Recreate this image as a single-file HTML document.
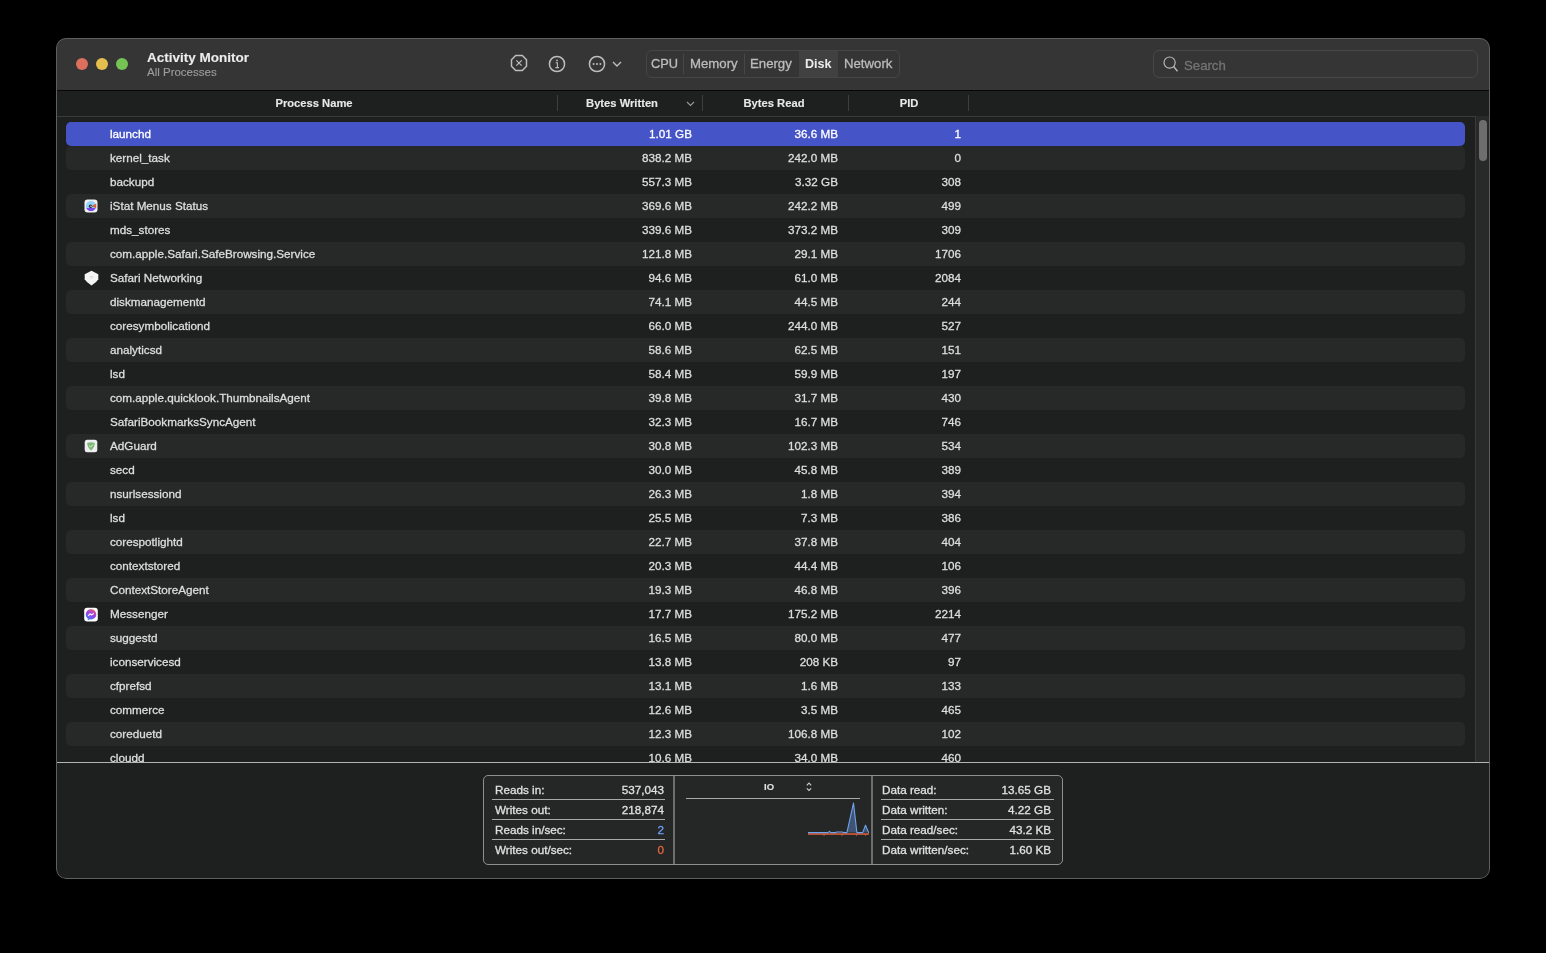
<!DOCTYPE html>
<html><head><meta charset="utf-8">
<style>
*{margin:0;padding:0;box-sizing:border-box}
html,body{width:1546px;height:953px;background:#000;overflow:hidden;font-family:"Liberation Sans",sans-serif}
.win{position:absolute;left:56px;top:38px;width:1434px;height:841px;border-radius:10px;background:#1e1f1f;overflow:hidden}
.bord{position:absolute;left:0;top:0;width:1434px;height:841px;border-radius:10px;border:1px solid #5f5f5f}
.tb{position:absolute;left:0;top:0;width:100%;height:53px;background:#353535;border-bottom:1px solid #070707}
.light{position:absolute;top:20px;width:12px;height:12px;border-radius:50%}
.t1{position:absolute;left:91px;top:12px;font-weight:bold;font-size:13.5px;color:#ececec;letter-spacing:0}
.t2{position:absolute;left:91px;top:28px;font-size:11.5px;color:#9d9d9d}
.seg{position:absolute;left:590px;top:12px;width:254px;height:28px;border:1px solid #464646;border-radius:6px}
.seg span{position:absolute;top:5px;font-size:13.2px;color:#bcbcbc}
.seg .sep{position:absolute;top:3px;width:1px;height:20px;background:#474747}
.seg .on{position:absolute;left:152px;top:0;width:39px;height:26px;background:#414141}
.search{position:absolute;left:1097px;top:12px;width:325px;height:28px;border:1px solid #474747;border-radius:6px}
.search span{position:absolute;left:30px;top:7px;font-size:13.2px;color:#747474}
.hdr{position:absolute;left:0;top:53px;width:100%;height:26px;background:#1e1f1f;border-bottom:1px solid #3b3b3b}
.hdr span{position:absolute;top:6px;width:200px;text-align:center;font-weight:bold;font-size:11.2px;color:#e8e8e8}
.hdr .vs{position:absolute;top:4px;width:1px;height:16px;background:#3e3e3e}
.tbl{position:absolute;left:0;top:79px;width:1419px;height:645px;overflow:hidden}
.row{position:absolute;left:10px;width:1399px;height:24px;border-radius:5px;font-size:11.7px;color:#dedede}
.row.alt{background:#272828}
.row.sel{background:#4555c8;color:#fff}
.row span{position:absolute;top:5px;white-space:nowrap}
.nm{left:44px}
.bw{right:773px}
.br{right:627px}
.pid{right:504px}
.ic{position:absolute}
.scroll{position:absolute;left:1419px;top:78px;width:15px;height:646px;background:#282929;border-left:1px solid #3a3a3a}
.thumb{position:absolute;left:3px;top:4px;width:8px;height:41px;border-radius:4px;background:#6e6e6e}
.split{position:absolute;left:0;top:724px;width:100%;height:1px;background:#b4b4b4}
.box{position:absolute;left:427px;top:737px;width:580px;height:90px;border:1px solid #8f8f8f;border-radius:5px;background:#252626}
.st{position:absolute;font-size:11.7px;color:#e0e0e0;white-space:nowrap}
.hl{position:absolute;height:1px;background:#a9a9a9}
.vd{position:absolute;top:0;width:2px;height:88px;background:#6e6e6e}
.io{position:absolute;left:280px;top:5px;font-weight:bold;font-size:9.5px;color:#e0e0e0}
.tb,.hdr,.tbl,.box{will-change:transform}
.row span,.st,.seg span,.search span{-webkit-text-stroke:0.3px currentColor}
.t1,.t2,.hdr span,.io{-webkit-text-stroke:0.12px currentColor}
</style></head><body>
<div class="win">
  <div class="tb">
    <div class="light" style="left:20px;background:#dd705d"></div>
    <div class="light" style="left:40px;background:#e3bf4d"></div>
    <div class="light" style="left:60px;background:#77c255"></div>
    <div class="t1">Activity Monitor</div>
    <div class="t2">All Processes</div>
    <svg style="position:absolute;left:454px;top:16px" width="18" height="18" viewBox="0 0 18 18"><path d="M5.7 1.5 L12.3 1.5 L16.5 5.7 L16.5 12.3 L12.3 16.5 L5.7 16.5 L1.5 12.3 L1.5 5.7 Z" fill="none" stroke="#bdbdbd" stroke-width="1.5"/><path d="M6.3 6.3 L11.7 11.7 M11.7 6.3 L6.3 11.7" stroke="#bdbdbd" stroke-width="1.2"/></svg>
    <svg style="position:absolute;left:492px;top:16.5px" width="18" height="18" viewBox="0 0 18 18"><circle cx="9" cy="9" r="7.6" fill="none" stroke="#bdbdbd" stroke-width="1.5"/><circle cx="9" cy="5.4" r="0.9" fill="#bdbdbd"/><path d="M7.6 7.8 L9.4 7.8 L9.4 12.6 M7.4 12.6 L11 12.6" stroke="#bdbdbd" stroke-width="1.1" fill="none"/></svg>
    <svg style="position:absolute;left:532px;top:16.5px" width="18" height="18" viewBox="0 0 18 18"><circle cx="9" cy="9" r="7.6" fill="none" stroke="#bdbdbd" stroke-width="1.5"/><circle cx="5.6" cy="9" r="1" fill="#bdbdbd"/><circle cx="9" cy="9" r="1" fill="#bdbdbd"/><circle cx="12.4" cy="9" r="1" fill="#bdbdbd"/></svg>
    <svg style="position:absolute;left:556px;top:22px" width="10" height="8" viewBox="0 0 10 8"><path d="M1 2 L5 6 L9 2" fill="none" stroke="#bdbdbd" stroke-width="1.4"/></svg>
    <div class="seg">
      <div class="on"></div>
      <span style="left:4px;font-size:12.8px">CPU</span>
      <div class="sep" style="left:36px"></div>
      <span style="left:43px">Memory</span>
      <div class="sep" style="left:97px"></div>
      <span style="left:103px">Energy</span>
      <span style="left:158px;font-weight:bold;color:#ececec;font-size:12.6px;top:6px;-webkit-text-stroke:0">Disk</span>
      <span style="left:197px">Network</span>
    </div>
    <div class="search">
      <svg style="position:absolute;left:9px;top:5px" width="16" height="16" viewBox="0 0 16 16"><circle cx="6.6" cy="6.6" r="5.6" fill="none" stroke="#b5b5b5" stroke-width="1.2"/><path d="M10.6 10.6 L14.5 15.2" stroke="#b5b5b5" stroke-width="1.5"/></svg>
      <span>Search</span>
    </div>
  </div>
  <div class="hdr">
    <span style="left:158px">Process Name</span>
    <div class="vs" style="left:501px"></div>
    <span style="left:466px">Bytes Written</span>
    <svg style="position:absolute;left:630px;top:10px" width="9" height="6" viewBox="0 0 9 6"><path d="M1 1 L4.5 4.5 L8 1" fill="none" stroke="#9a9a9a" stroke-width="1.1"/></svg>
    <div class="vs" style="left:646px"></div>
    <span style="left:618px">Bytes Read</span>
    <div class="vs" style="left:792px"></div>
    <span style="left:753px">PID</span>
    <div class="vs" style="left:912px"></div>
  </div>
  <div class="tbl">
<div class="row sel" style="top:5px"><span class="nm">launchd</span><span class="bw">1.01 GB</span><span class="br">36.6 MB</span><span class="pid">1</span></div>
<div class="row alt" style="top:29px"><span class="nm">kernel_task</span><span class="bw">838.2 MB</span><span class="br">242.0 MB</span><span class="pid">0</span></div>
<div class="row" style="top:53px"><span class="nm">backupd</span><span class="bw">557.3 MB</span><span class="br">3.32 GB</span><span class="pid">308</span></div>
<div class="row alt" style="top:77px"><svg class="ic" style="left:18px;top:5px" width="14" height="14" viewBox="0 0 14 14"><rect x="0.5" y="0.5" width="13" height="13" rx="3" fill="#efefef"/><circle cx="7" cy="7" r="5.1" fill="#8ed2fa"/><path d="M2.31 9 A5.1 5.1 0 0 0 11.69 9 Z" fill="#7846ee"/><path d="M7.6 7.2 L12.2 4.4 L12.2 9.2 Z" fill="#dd5f33"/><circle cx="6.6" cy="7.2" r="1.7" fill="#202030"/><circle cx="7" cy="7.2" r="0.8" fill="#eee"/></svg><span class="nm">iStat Menus Status</span><span class="bw">369.6 MB</span><span class="br">242.2 MB</span><span class="pid">499</span></div>
<div class="row" style="top:101px"><span class="nm">mds_stores</span><span class="bw">339.6 MB</span><span class="br">373.2 MB</span><span class="pid">309</span></div>
<div class="row alt" style="top:125px"><span class="nm">com.apple.Safari.SafeBrowsing.Service</span><span class="bw">121.8 MB</span><span class="br">29.1 MB</span><span class="pid">1706</span></div>
<div class="row" style="top:149px"><svg class="ic" style="left:18px;top:4px" width="15" height="16" viewBox="0 0 15 16"><path d="M7.5 0.8 L14.3 4.3 L14.3 9.2 Q12.5 12.5 7.5 15.5 Q2.5 12.5 0.7 9.2 L0.7 4.3 Z" fill="#f4f4f4"/><path d="M5 6.2 L10 6.2 L7.5 8.8 Z" fill="#dcdcdc"/></svg><span class="nm">Safari Networking</span><span class="bw">94.6 MB</span><span class="br">61.0 MB</span><span class="pid">2084</span></div>
<div class="row alt" style="top:173px"><span class="nm">diskmanagementd</span><span class="bw">74.1 MB</span><span class="br">44.5 MB</span><span class="pid">244</span></div>
<div class="row" style="top:197px"><span class="nm">coresymbolicationd</span><span class="bw">66.0 MB</span><span class="br">244.0 MB</span><span class="pid">527</span></div>
<div class="row alt" style="top:221px"><span class="nm">analyticsd</span><span class="bw">58.6 MB</span><span class="br">62.5 MB</span><span class="pid">151</span></div>
<div class="row" style="top:245px"><span class="nm">lsd</span><span class="bw">58.4 MB</span><span class="br">59.9 MB</span><span class="pid">197</span></div>
<div class="row alt" style="top:269px"><span class="nm">com.apple.quicklook.ThumbnailsAgent</span><span class="bw">39.8 MB</span><span class="br">31.7 MB</span><span class="pid">430</span></div>
<div class="row" style="top:293px"><span class="nm">SafariBookmarksSyncAgent</span><span class="bw">32.3 MB</span><span class="br">16.7 MB</span><span class="pid">746</span></div>
<div class="row alt" style="top:317px"><svg class="ic" style="left:18px;top:5px" width="14" height="14" viewBox="0 0 14 14"><rect x="0.7" y="0.7" width="12.6" height="12.6" rx="2.5" fill="#eeeef2"/><path d="M3.2 3.9 Q7 2.6 10.8 3.9 Q10.6 8.8 7 11.4 Q3.4 8.8 3.2 3.9 Z" fill="#7db873"/><path d="M5 6.6 L6.6 8 L9.2 5.4" stroke="#e3efe0" stroke-width="0.9" fill="none"/></svg><span class="nm">AdGuard</span><span class="bw">30.8 MB</span><span class="br">102.3 MB</span><span class="pid">534</span></div>
<div class="row" style="top:341px"><span class="nm">secd</span><span class="bw">30.0 MB</span><span class="br">45.8 MB</span><span class="pid">389</span></div>
<div class="row alt" style="top:365px"><span class="nm">nsurlsessiond</span><span class="bw">26.3 MB</span><span class="br">1.8 MB</span><span class="pid">394</span></div>
<div class="row" style="top:389px"><span class="nm">lsd</span><span class="bw">25.5 MB</span><span class="br">7.3 MB</span><span class="pid">386</span></div>
<div class="row alt" style="top:413px"><span class="nm">corespotlightd</span><span class="bw">22.7 MB</span><span class="br">37.8 MB</span><span class="pid">404</span></div>
<div class="row" style="top:437px"><span class="nm">contextstored</span><span class="bw">20.3 MB</span><span class="br">44.4 MB</span><span class="pid">106</span></div>
<div class="row alt" style="top:461px"><span class="nm">ContextStoreAgent</span><span class="bw">19.3 MB</span><span class="br">46.8 MB</span><span class="pid">396</span></div>
<div class="row" style="top:485px"><svg class="ic" style="left:18px;top:4.5px" width="14" height="15" viewBox="0 0 14 15"><rect x="0.2" y="0.8" width="13.6" height="13.6" rx="3" fill="#ffffff"/><defs><linearGradient id="mg" x1="0.2" y1="1" x2="0.8" y2="0"><stop offset="0" stop-color="#3b7cf0"/><stop offset="0.5" stop-color="#9b3ff0"/><stop offset="1" stop-color="#e45c6a"/></linearGradient></defs><ellipse cx="7" cy="7.4" rx="5.3" ry="5.1" fill="url(#mg)"/><path d="M3.6 10.8 L3.9 13.3 L6 12.2" fill="#4a78ee"/><path d="M4.2 8.8 L6 6.8 L7.6 8 L9.8 6.4" stroke="#fff" stroke-width="1.1" fill="none" stroke-linejoin="round"/></svg><span class="nm">Messenger</span><span class="bw">17.7 MB</span><span class="br">175.2 MB</span><span class="pid">2214</span></div>
<div class="row alt" style="top:509px"><span class="nm">suggestd</span><span class="bw">16.5 MB</span><span class="br">80.0 MB</span><span class="pid">477</span></div>
<div class="row" style="top:533px"><span class="nm">iconservicesd</span><span class="bw">13.8 MB</span><span class="br">208 KB</span><span class="pid">97</span></div>
<div class="row alt" style="top:557px"><span class="nm">cfprefsd</span><span class="bw">13.1 MB</span><span class="br">1.6 MB</span><span class="pid">133</span></div>
<div class="row" style="top:581px"><span class="nm">commerce</span><span class="bw">12.6 MB</span><span class="br">3.5 MB</span><span class="pid">465</span></div>
<div class="row alt" style="top:605px"><span class="nm">coreduetd</span><span class="bw">12.3 MB</span><span class="br">106.8 MB</span><span class="pid">102</span></div>
<div class="row" style="top:629px"><span class="nm">cloudd</span><span class="bw">10.6 MB</span><span class="br">34.0 MB</span><span class="pid">460</span></div>
  </div>
  <div class="scroll"><div class="thumb"></div></div>
  <div class="split"></div>
  <div class="box">
    <span class="st" style="left:11px;top:7px">Reads in:</span><span class="st r" style="right:398px;top:7px">537,043</span>
    <div class="hl" style="left:8px;top:23px;width:173px"></div>
    <span class="st" style="left:11px;top:27px">Writes out:</span><span class="st r" style="right:398px;top:27px">218,874</span>
    <div class="hl" style="left:8px;top:43px;width:173px"></div>
    <span class="st" style="left:11px;top:47px">Reads in/sec:</span><span class="st r" style="right:398px;top:47px;color:#6d9ef2">2</span>
    <div class="hl" style="left:8px;top:63px;width:173px"></div>
    <span class="st" style="left:11px;top:67px">Writes out/sec:</span><span class="st r" style="right:398px;top:67px;color:#e3663f">0</span>
    <div class="vd" style="left:189px"></div>
    <span class="io">IO</span>
    <svg style="position:absolute;left:320.5px;top:5.5px" width="8" height="10" viewBox="0 0 8 10"><path d="M1.8 3.3 L4 1.1 L6.2 3.3 M1.8 6.3 L4 8.5 L6.2 6.3" fill="none" stroke="#cfcfcf" stroke-width="1.1"/></svg>
    <div class="hl" style="left:202px;top:22px;width:174px"></div>
    <svg style="position:absolute;left:322px;top:24px" width="66" height="40" viewBox="0 0 66 40">
      <path d="M2 32.6 L22 32.6 L23.4 31.4 L24.8 32.6 L29 32.6 L31 32 L36 32 L38 32.6 L40.9 32.6 L47.5 3 L50.9 32.6 L56.7 32.6 L59.5 25.2 L62.7 32.6 Z" fill="#3f5472"/>
      <path d="M2 34 L63 34" stroke="#e2603a" stroke-width="1.3"/>
      <path d="M17 34.3 L18 35.5 L19 34.3 M35 34.3 L36 35.5 L37 34.3 M49.5 34.3 L50.5 35.5 L51.5 34.3 M58.5 34.3 L59.5 35.5 L60.5 34.3" stroke="#e2603a" stroke-width="0.9" fill="none"/>
      <path d="M2 32.6 L22 32.6 L23.4 31.4 L24.8 32.6 L29 32.6 L31 32 L36 32 L38 32.6 L40.9 32.6 L47.5 3 L50.9 32.6 L56.7 32.6 L59.5 25.2 L62.7 32.6 L63 32.6" fill="none" stroke="#6fa3f0" stroke-width="1.1" stroke-linejoin="round"/>
    </svg>
    <div class="vd" style="left:387px"></div>
    <span class="st" style="left:398px;top:7px">Data read:</span><span class="st r" style="right:11px;top:7px">13.65 GB</span>
    <div class="hl" style="left:397px;top:23px;width:173px"></div>
    <span class="st" style="left:398px;top:27px">Data written:</span><span class="st r" style="right:11px;top:27px">4.22 GB</span>
    <div class="hl" style="left:397px;top:43px;width:173px"></div>
    <span class="st" style="left:398px;top:47px">Data read/sec:</span><span class="st r" style="right:11px;top:47px">43.2 KB</span>
    <div class="hl" style="left:397px;top:63px;width:173px"></div>
    <span class="st" style="left:398px;top:67px">Data written/sec:</span><span class="st r" style="right:11px;top:67px">1.60 KB</span>
  </div>
  <div class="bord"></div>
</div>
</body></html>
